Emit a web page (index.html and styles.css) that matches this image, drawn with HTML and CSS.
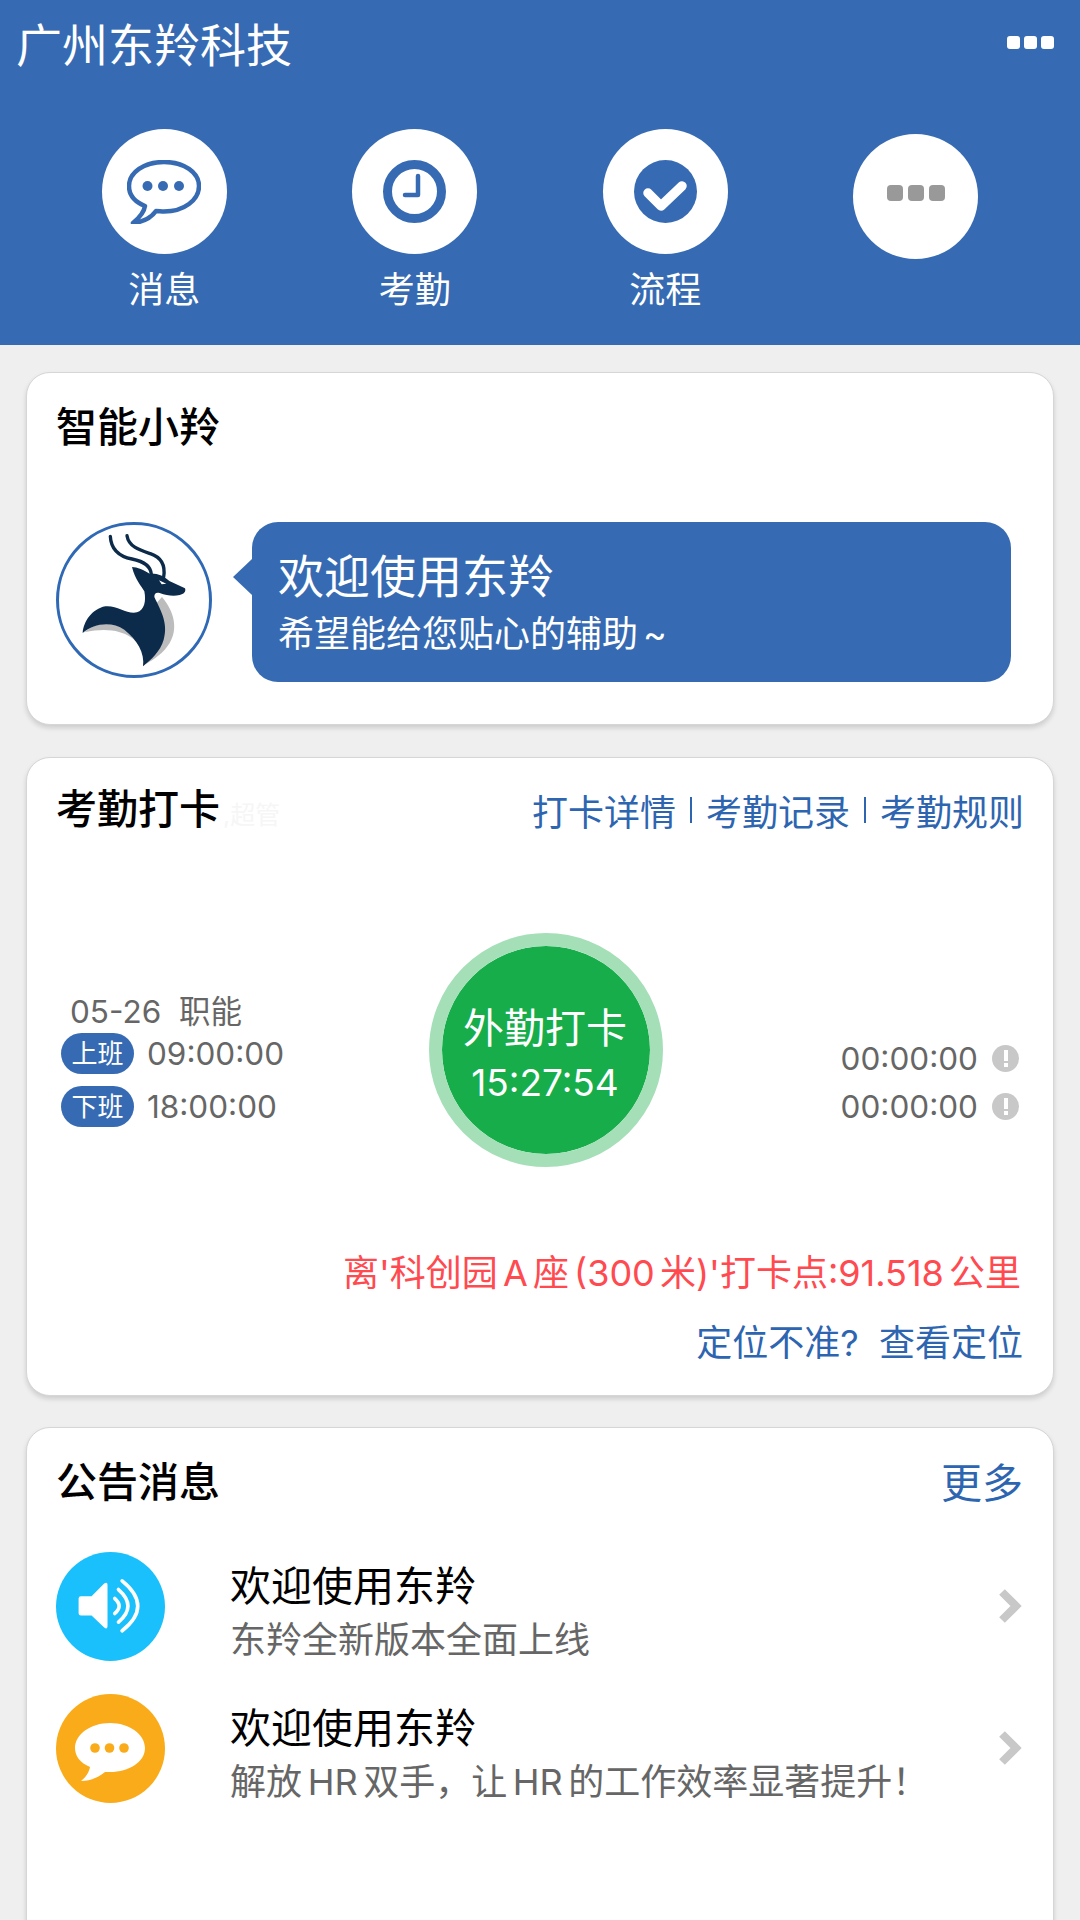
FILE: index.html
```html
<!DOCTYPE html>
<html>
<head>
    <meta charset="utf-8">
    <title>广州东羚科技</title>
    <link rel="stylesheet" href="styles.css">
</head>
<body>
<div class="page">
    <header class="top">
        <div class="top-bar">
            <div class="company">广州东羚科技</div>
            <div class="dots"><i></i><i></i><i></i></div>
        </div>
        <nav class="shortcuts">
            <div class="shortcut">
                <div class="round">
                    <svg width="74" height="64" viewBox="0 0 74 64">
                        <path d="M37 2C17 2 2 12.500 2 26C2 35 8 42 18 46C17 53 12 58 6 63C16 62 24 58 29 51C32 51 34 51.500 37 51.500C57 51.500 72 40 72 26C72 12.500 57 2 37 2Z" fill="none" stroke="#366bb3" stroke-width="4.500" stroke-linejoin="round"/>
                        <circle cx="20.500" cy="26" r="5" fill="#366bb3"/>
                        <circle cx="36" cy="26" r="5" fill="#366bb3"/>
                        <circle cx="52" cy="26" r="5" fill="#366bb3"/>
                    </svg>
                </div>
                <span>消息</span>
            </div>
            <div class="shortcut">
                <div class="round">
                    <svg width="63" height="63" viewBox="0 0 63 63">
                        <circle cx="31.500" cy="31.500" r="27" fill="none" stroke="#366bb3" stroke-width="9"/>
                        <path d="M35 16V35H22" fill="none" stroke="#366bb3" stroke-width="4.500" stroke-linecap="round" stroke-linejoin="round"/>
                    </svg>
                </div>
                <span>考勤</span>
            </div>
            <div class="shortcut">
                <div class="round">
                    <svg width="63" height="63" viewBox="0 0 63 63">
                        <circle cx="31.500" cy="31.500" r="31.500" fill="#366bb3"/>
                        <path d="M14 33L27 46L48 26" fill="none" stroke="#fff" stroke-width="9.500" stroke-linejoin="round" stroke-linecap="round"/>
                    </svg>
                </div>
                <span>流程</span>
            </div>
            <div class="shortcut shortcut-more">
                <div class="round">
                    <div class="gray-dots"><i></i><i></i><i></i></div>
                </div>
            </div>
        </nav>
    </header>

    <section class="card card-assistant">
        <div class="card-head">
            <h2>智能小羚</h2>
        </div>
        <div class="assistant">
            <div class="avatar">
                <svg width="150" height="150" viewBox="116 496 450 450">
                    <path d="M425 712C465 760 472 810 448 850C430 880 400 900 378 912L372 880C350 835 300 795 192 818C225 785 300 780 345 800Z" fill="#bcbcbc"/>
                    <path d="M187 820C190 785 215 748 255 740C290 736 320 765 350 758C372 752 378 725 372 695C364 680 345 662 335 622C350 622 372 632 388 642C410 640 432 650 447 664L494 686C498 696 490 704 478 706C460 710 440 708 418 700C408 698 402 700 402 712C420 750 445 790 430 840C420 875 392 900 368 920C374 880 350 840 312 810C275 785 222 790 187 820Z" fill="#0c2a4a"/>
                    <path d="M270 530C272 570 295 590 335 598C370 605 392 620 393 645" fill="none" stroke="#0c2a4a" stroke-width="10" stroke-linecap="round"/>
                    <path d="M320 528C325 560 355 570 390 582C420 592 436 615 430 652" fill="none" stroke="#0c2a4a" stroke-width="10" stroke-linecap="round"/>
                    <path d="M416 662L438 672L424 674Z" fill="#fff"/>
                </svg>
            </div>
            <div class="bubble">
                <div class="bubble-title">欢迎使用东羚</div>
                <div class="bubble-sub">希望能给您贴心的辅助<span class="tilde">~</span></div>
            </div>
        </div>
    </section>

    <section class="card card-clock">
        <div class="card-head">
            <h2>考勤打卡<small>,超管</small></h2>
            <div class="head-links">
                <a>打卡详情</a><b></b><a>考勤记录</a><b></b><a>考勤规则</a>
            </div>
        </div>
        <div class="clock">
            <div class="shift">
                <div class="shift-date">05-26&nbsp; 职能</div>
                <div class="shift-row"><span class="pill">上班</span><span>09:00:00</span></div>
                <div class="shift-row"><span class="pill">下班</span><span>18:00:00</span></div>
            </div>
            <div class="punch">
                <div class="punch-title">外勤打卡</div>
                <div class="punch-time">15:27:54</div>
            </div>
            <div class="records">
                <div class="record"><span>00:00:00</span><i class="warn"></i></div>
                <div class="record"><span>00:00:00</span><i class="warn"></i></div>
            </div>
        </div>
        <div class="distance">离'科创园 A 座 (300 米)'打卡点:91.518 公里</div>
        <div class="locate">定位不准?&nbsp; 查看定位</div>
    </section>

    <section class="card card-notice">
        <div class="card-head">
            <h2>公告消息</h2>
            <a class="more">更多</a>
        </div>
        <div class="notice">
            <svg class="notice-icon" width="109" height="109" viewBox="107 157 328 328">
                <circle cx="271" cy="321" r="164" fill="#1ac0fb"/>
                <path d="M182 290H214L252 252Q262 246 262 256V380Q262 392 252 384L214 348H182Q175 348 175 341V297Q175 290 182 290Z" fill="#fff"/>
                <path d="M284 297Q310 320 284 342" fill="none" stroke="#fff" stroke-width="11" stroke-linecap="round"/>
                <path d="M295 270Q352 320 295 368" fill="none" stroke="#fff" stroke-width="11" stroke-linecap="round"/>
                <path d="M306 244Q400 320 306 394" fill="none" stroke="#fff" stroke-width="11" stroke-linecap="round"/>
            </svg>
            <div class="notice-text">
                <div class="notice-title">欢迎使用东羚</div>
                <div class="notice-sub">东羚全新版本全面上线</div>
            </div>
            <svg class="chevron" width="24" height="36" viewBox="0 0 24 36"><path d="M4 4L18 18L4 32" fill="none" stroke="#c8c8c8" stroke-width="8"/></svg>
        </div>
        <div class="notice">
            <svg class="notice-icon" width="109" height="109" viewBox="0 0 109 109">
                <circle cx="54.500" cy="54.500" r="54.500" fill="#faab1a"/>
                <path d="M54 29C35 29 19 40 19 54C19 62 24 69 34 73C33 79 29 84 25 87C35 87 43 83 49 78C51 78 52 78 54 78C73 78 89 68 89 54C89 40 73 29 54 29Z" fill="#fff"/>
                <circle cx="39" cy="54" r="4.800" fill="#faab1a"/>
                <circle cx="53.500" cy="54" r="4.800" fill="#faab1a"/>
                <circle cx="68" cy="54" r="4.800" fill="#faab1a"/>
            </svg>
            <div class="notice-text">
                <div class="notice-title">欢迎使用东羚</div>
                <div class="notice-sub spaced">解放 HR 双手，让 HR 的工作效率显著提升！</div>
            </div>
            <svg class="chevron" width="24" height="36" viewBox="0 0 24 36"><path d="M4 4L18 18L4 32" fill="none" stroke="#c8c8c8" stroke-width="8"/></svg>
        </div>
    </section>
</div>
</body>
</html>
```

FILE: styles.css
```css
* {
    box-sizing: border-box;
}
html, body {
    margin: 0;
    padding: 0;
}
body {
    background-color: #efefef;
    font-family: Inter, "Noto Sans CJK SC", sans-serif;
    color: #000;
}
.page {
    height: 1920px;
    overflow: hidden;
}

/* header */
.top {
    height: 345px;
    background-color: #366bb3;
    color: #fff;
}
.top-bar {
    height: 129px;
    display: flex;
    justify-content: space-between;
    padding: 13px 26px 0 16px;
}
.company {
    font-size: 46px;
    line-height: 64px;
}
.dots {
    display: flex;
    gap: 4px;
    margin-top: 23px;
}
.dots i {
    width: 13px;
    height: 13px;
    border-radius: 3px;
    background-color: #fff;
}
.shortcuts {
    display: grid;
    grid-template-columns: repeat(4, 250.500px);
    padding-left: 39px;
}
.shortcut {
    display: flex;
    flex-direction: column;
    align-items: center;
    font-size: 36px;
    line-height: 50px;
}
.shortcut span {
    margin-top: 11px;
}
.shortcut-more {
    padding-top: 5px;
}
.round {
    width: 125px;
    height: 125px;
    border-radius: 50%;
    background-color: #fff;
    display: flex;
    align-items: center;
    justify-content: center;
}
.gray-dots {
    display: flex;
    gap: 5px;
    margin-top: -8px;
}
.gray-dots i {
    width: 16px;
    height: 16px;
    border-radius: 4px;
    background-color: #999;
}

/* cards */
.card {
    margin: 0 26px;
    background-color: #fff;
    border: 1px solid #d6d6d6;
    border-radius: 24px;
    box-shadow: 0 3px 5px rgba(0, 0, 0, 0.14);
}
.card-assistant {
    margin-top: 27px;
    height: 353px;
}
.card-clock {
    margin-top: 32px;
    height: 639px;
}
.card-notice {
    margin-top: 31px;
    height: 560px;
}
.card-head {
    height: 108px;
    display: flex;
    align-items: center;
    justify-content: space-between;
    padding: 0 29px 0 29px;
}
.card-head h2 {
    margin: 0;
    font-size: 41px;
    font-weight: 500;
    line-height: 50px;
}
.card-head small {
    font-size: 25px;
    font-weight: 400;
    color: #f6f6f6;
    margin-left: 3px;
}
.head-links {
    display: flex;
    align-items: center;
    gap: 14px;
    margin-bottom: 4px;
    font-size: 36px;
    color: #2d65b0;
}
.head-links b {
    width: 2px;
    height: 26px;
    background-color: #2d65b0;
}

/* assistant */
.assistant {
    display: flex;
    margin-top: 41px;
    padding-left: 29px;
}
.avatar {
    width: 156px;
    height: 156px;
    border: 3px solid #2f69b5;
    border-radius: 50%;
}
.bubble {
    position: relative;
    width: 759px;
    height: 160px;
    margin-left: 40px;
    padding: 27px 26px 0;
    border-radius: 26px;
    background-color: #366bb3;
    color: #fff;
}
.bubble::before {
    content: "";
    position: absolute;
    left: -19px;
    top: 37px;
    border-top: 18px solid transparent;
    border-bottom: 18px solid transparent;
    border-right: 19px solid #366bb3;
}
.bubble-title {
    font-size: 46px;
    line-height: 54px;
}
.bubble-sub {
    font-size: 36px;
    line-height: 50px;
    margin-top: 6px;
}
.tilde {
    margin-left: 5px;
}

/* clock in */
.clock {
    display: grid;
    grid-template-columns: 368px 234px 1fr;
    margin-top: 67px;
    padding: 0 34px;
}
.shift {
    padding-top: 61px;
    font-size: 31.500px;
    color: #666;
}
.shift-date {
    padding-left: 9px;
    line-height: 36px;
}
.shift-row {
    display: flex;
    align-items: center;
    gap: 13px;
    margin-top: 12px;
}
.shift-date + .shift-row {
    margin-top: 3px;
}
.pill {
    width: 73px;
    height: 41px;
    border-radius: 21px;
    background-color: #366bb3;
    color: #fff;
    font-size: 26px;
    line-height: 41px;
    text-align: center;
}
.punch {
    width: 234px;
    height: 234px;
    border: 13px solid #a5dfb8;
    border-radius: 50%;
    background-color: #16ad4a;
    background-clip: padding-box;
    color: #fff;
    text-align: center;
}
.punch-title {
    margin-top: 57px;
    margin-right: 2px;
    font-size: 41px;
    line-height: 50px;
}
.punch-time {
    margin-top: 6px;
    margin-right: 2px;
    font-size: 37px;
    line-height: 48px;
}
.records {
    padding-top: 101px;
    font-size: 31.500px;
    color: #666;
}
.record {
    display: flex;
    align-items: center;
    justify-content: flex-end;
    gap: 14px;
    height: 48px;
}
.warn {
    position: relative;
    width: 27px;
    height: 27px;
    border-radius: 50%;
    background-color: #c8c8c8;
}
.warn::before {
    content: "";
    position: absolute;
    left: 11.500px;
    top: 5px;
    width: 4px;
    height: 11px;
    background-color: #fff;
}
.warn::after {
    content: "";
    position: absolute;
    left: 11.500px;
    top: 18px;
    width: 4px;
    height: 4px;
    background-color: #fff;
}
.distance {
    margin-top: 81px;
    padding-right: 32px;
    font-size: 36px;
    line-height: 50px;
    color: #ff4a50;
    text-align: right;
    word-spacing: -5px;
}
.locate {
    margin-top: 20px;
    padding-right: 30px;
    font-size: 36px;
    line-height: 50px;
    color: #2d65b0;
    text-align: right;
}

/* notices */
.more {
    margin-bottom: 4px;
    margin-right: 1px;
    font-size: 41px;
    color: #2d65b0;
}
.notice {
    display: flex;
    align-items: flex-start;
    padding: 0 31px 0 29px;
    margin-top: 16px;
}
.notice + .notice {
    margin-top: 27px;
}
.notice-icon {
    flex: none;
}
.notice-text {
    padding: 7px 0 0 65px;
}
.notice-title {
    font-size: 41px;
    line-height: 54px;
}
.notice-sub {
    font-size: 36px;
    line-height: 54px;
    color: #666;
}
.spaced {
    word-spacing: -4.500px;
}
.chevron {
    margin: 36px 0 0 auto;
}
```
